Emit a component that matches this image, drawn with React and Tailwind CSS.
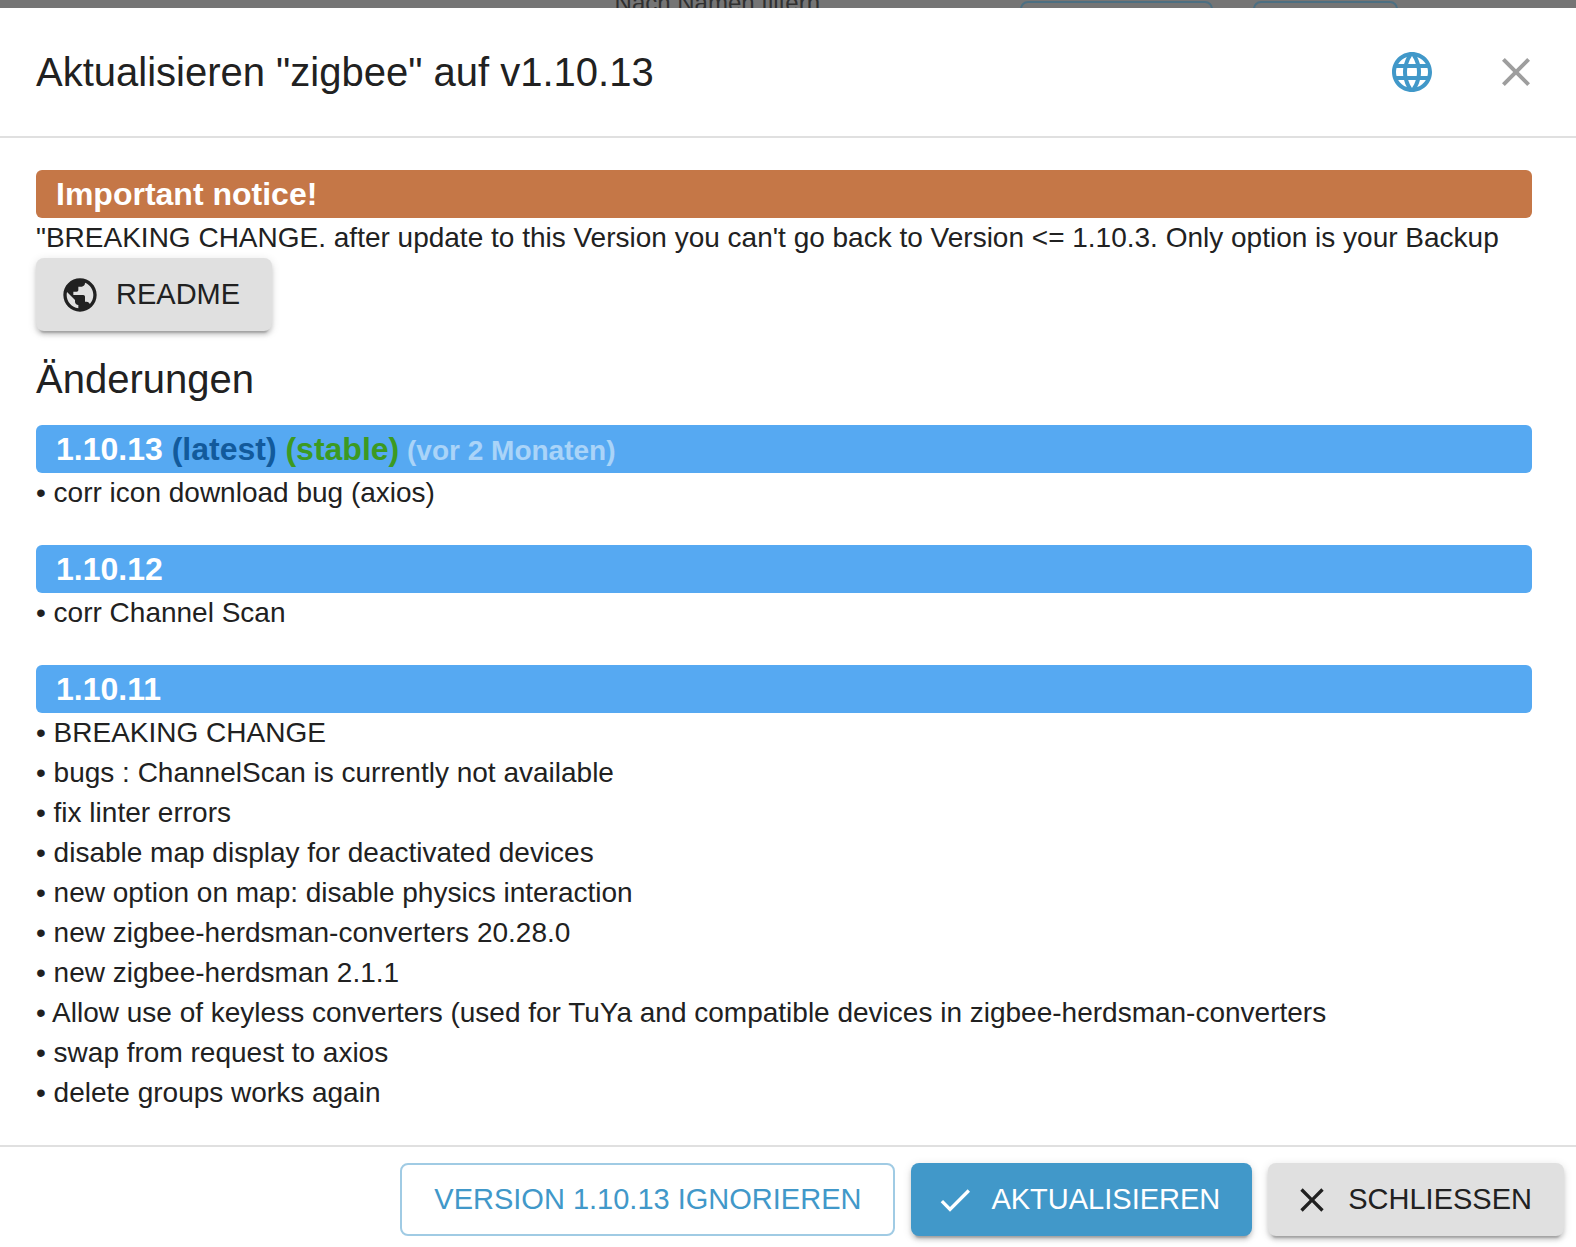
import React, { useState } from 'react';
import { MdCheck, MdClose, MdLanguage, MdPublic } from 'react-icons/md';

const versions = [
    {
        version: '1.10.13',
        latest: true,
        stable: true,
        date: 'vor 2 Monaten',
        news: ['corr icon download bug (axios)'],
    },
    {
        version: '1.10.12',
        news: ['corr Channel Scan'],
    },
    {
        version: '1.10.11',
        news: [
            'BREAKING CHANGE',
            'bugs : ChannelScan is currently not available',
            'fix linter errors',
            'disable map display for deactivated devices',
            'new option on map: disable physics interaction',
            'new zigbee-herdsman-converters 20.28.0',
            'new zigbee-herdsman 2.1.1',
            'Allow use of keyless converters (used for TuYa and compatible devices in zigbee-herdsman-converters',
            'swap from request to axios',
            'delete groups works again',
        ],
    },
];

const buttonBase = 'flex items-center rounded-lg py-3 text-[29px] leading-[49px] uppercase whitespace-nowrap';
const raised = 'shadow-[0_6px_2px_-4px_rgba(0,0,0,0.2),0_4px_4px_0_rgba(0,0,0,0.14),0_2px_10px_0_rgba(0,0,0,0.12)]';

function Button({ variant, icon: Icon, children, onClick }) {
    if (variant === 'outlined') {
        return (
            <button type="button" onClick={onClick} className={`${buttonBase} h-[73px] border-2 border-[#a0cbe4] px-8 text-[#4198c9]`}>
                {children}
            </button>
        );
    }

    const color = variant === 'primary' ? 'bg-[#4198c9] text-white' : 'bg-[#e0e0e0] text-[#212121]';
    return (
        <button type="button" onClick={onClick} className={`${buttonBase} ${raised} ${color} gap-4 pr-8 pl-6`}>
            {Icon && <Icon size={40} />}
            {children}
        </button>
    );
}

function VersionBlock({ item }) {
    return (
        <section>
            <h3 className="rounded-md bg-[#56a9f2] px-5 text-[32px] leading-[48px] font-bold text-white">
                {item.version}
                {item.latest && <span className="text-[#125a9c]"> (latest)</span>}
                {item.stable && <span className="text-[#3c9a21]"> (stable)</span>}
                {item.date && <span className="text-[28px] leading-none text-white/50"> ({item.date})</span>}
            </h3>
            <ul>
                {item.news.map((line) => (
                    <li key={line}>• {line}</li>
                ))}
            </ul>
        </section>
    );
}

export default function App() {
    const [ignored, setIgnored] = useState(false);

    return (
        <div className="flex min-h-screen flex-col bg-[#757575] font-['Liberation_Sans',Arial,sans-serif] text-[#212121]">
            {/* Adapter list toolbar behind the dialog */}
            <div className="flex h-2 items-start justify-end overflow-hidden pr-[178px]" aria-hidden="true">
                <span className="mr-[200px] text-2xl leading-1.5 text-[#303030]">Nach Namen filtern</span>
                <div className="mt-px mr-10 h-16 w-[193px] shrink-0 rounded-lg border-2 border-[#4c6f82]" />
                <div className="mt-px h-16 w-[145px] shrink-0 rounded-lg border-2 border-[#4c6f82]" />
            </div>

            <div role="dialog" aria-labelledby="dialog-title" className="flex flex-1 flex-col bg-white">
                {/* Header */}
                <header className="flex items-center justify-between border-b-2 border-[#e0e0e0] py-8 pr-5 pl-9">
                    <h2 id="dialog-title" className="text-[40px] leading-[64px]">
                        Aktualisieren "zigbee" auf v1.10.13
                    </h2>
                    <div className="-my-2 flex items-center gap-6">
                        <button type="button" aria-label="Übersetzen" className="rounded-full p-4 text-[#4198c9]">
                            <MdLanguage size={48} />
                        </button>
                        <button type="button" aria-label="Schließen" className="rounded-full p-4 text-[#9e9e9e]">
                            <MdClose size={48} />
                        </button>
                    </div>
                </header>

                {/* Content */}
                <main className="flex-1 py-8 pr-11 pl-9 text-[28px] leading-10">
                    <h3 className="rounded-md bg-[#c57747] px-5 text-[32px] leading-[48px] font-bold text-white">
                        Important notice!
                    </h3>
                    <p>
                        "BREAKING CHANGE. after update to this Version you can't go back to Version &lt;= 1.10.3. Only option is your Backup
                    </p>
                    <Button icon={MdPublic}>Readme</Button>

                    <h2 className="mt-4 mb-3.5 text-[40px] leading-[64px]">Änderungen</h2>
                    <div className="flex flex-col gap-8">
                        {versions.map((item) => (
                            <VersionBlock key={item.version} item={item} />
                        ))}
                    </div>
                </main>

                {/* Actions */}
                <footer className="flex justify-end gap-4 border-t-2 border-[#e0e0e0] pt-4 pr-3 pb-[11px]">
                    {!ignored && (
                        <Button variant="outlined" onClick={() => setIgnored(true)}>
                            Version 1.10.13 ignorieren
                        </Button>
                    )}
                    <Button variant="primary" icon={MdCheck}>Aktualisieren</Button>
                    <Button icon={MdClose}>Schliessen</Button>
                </footer>
            </div>
        </div>
    );
}
